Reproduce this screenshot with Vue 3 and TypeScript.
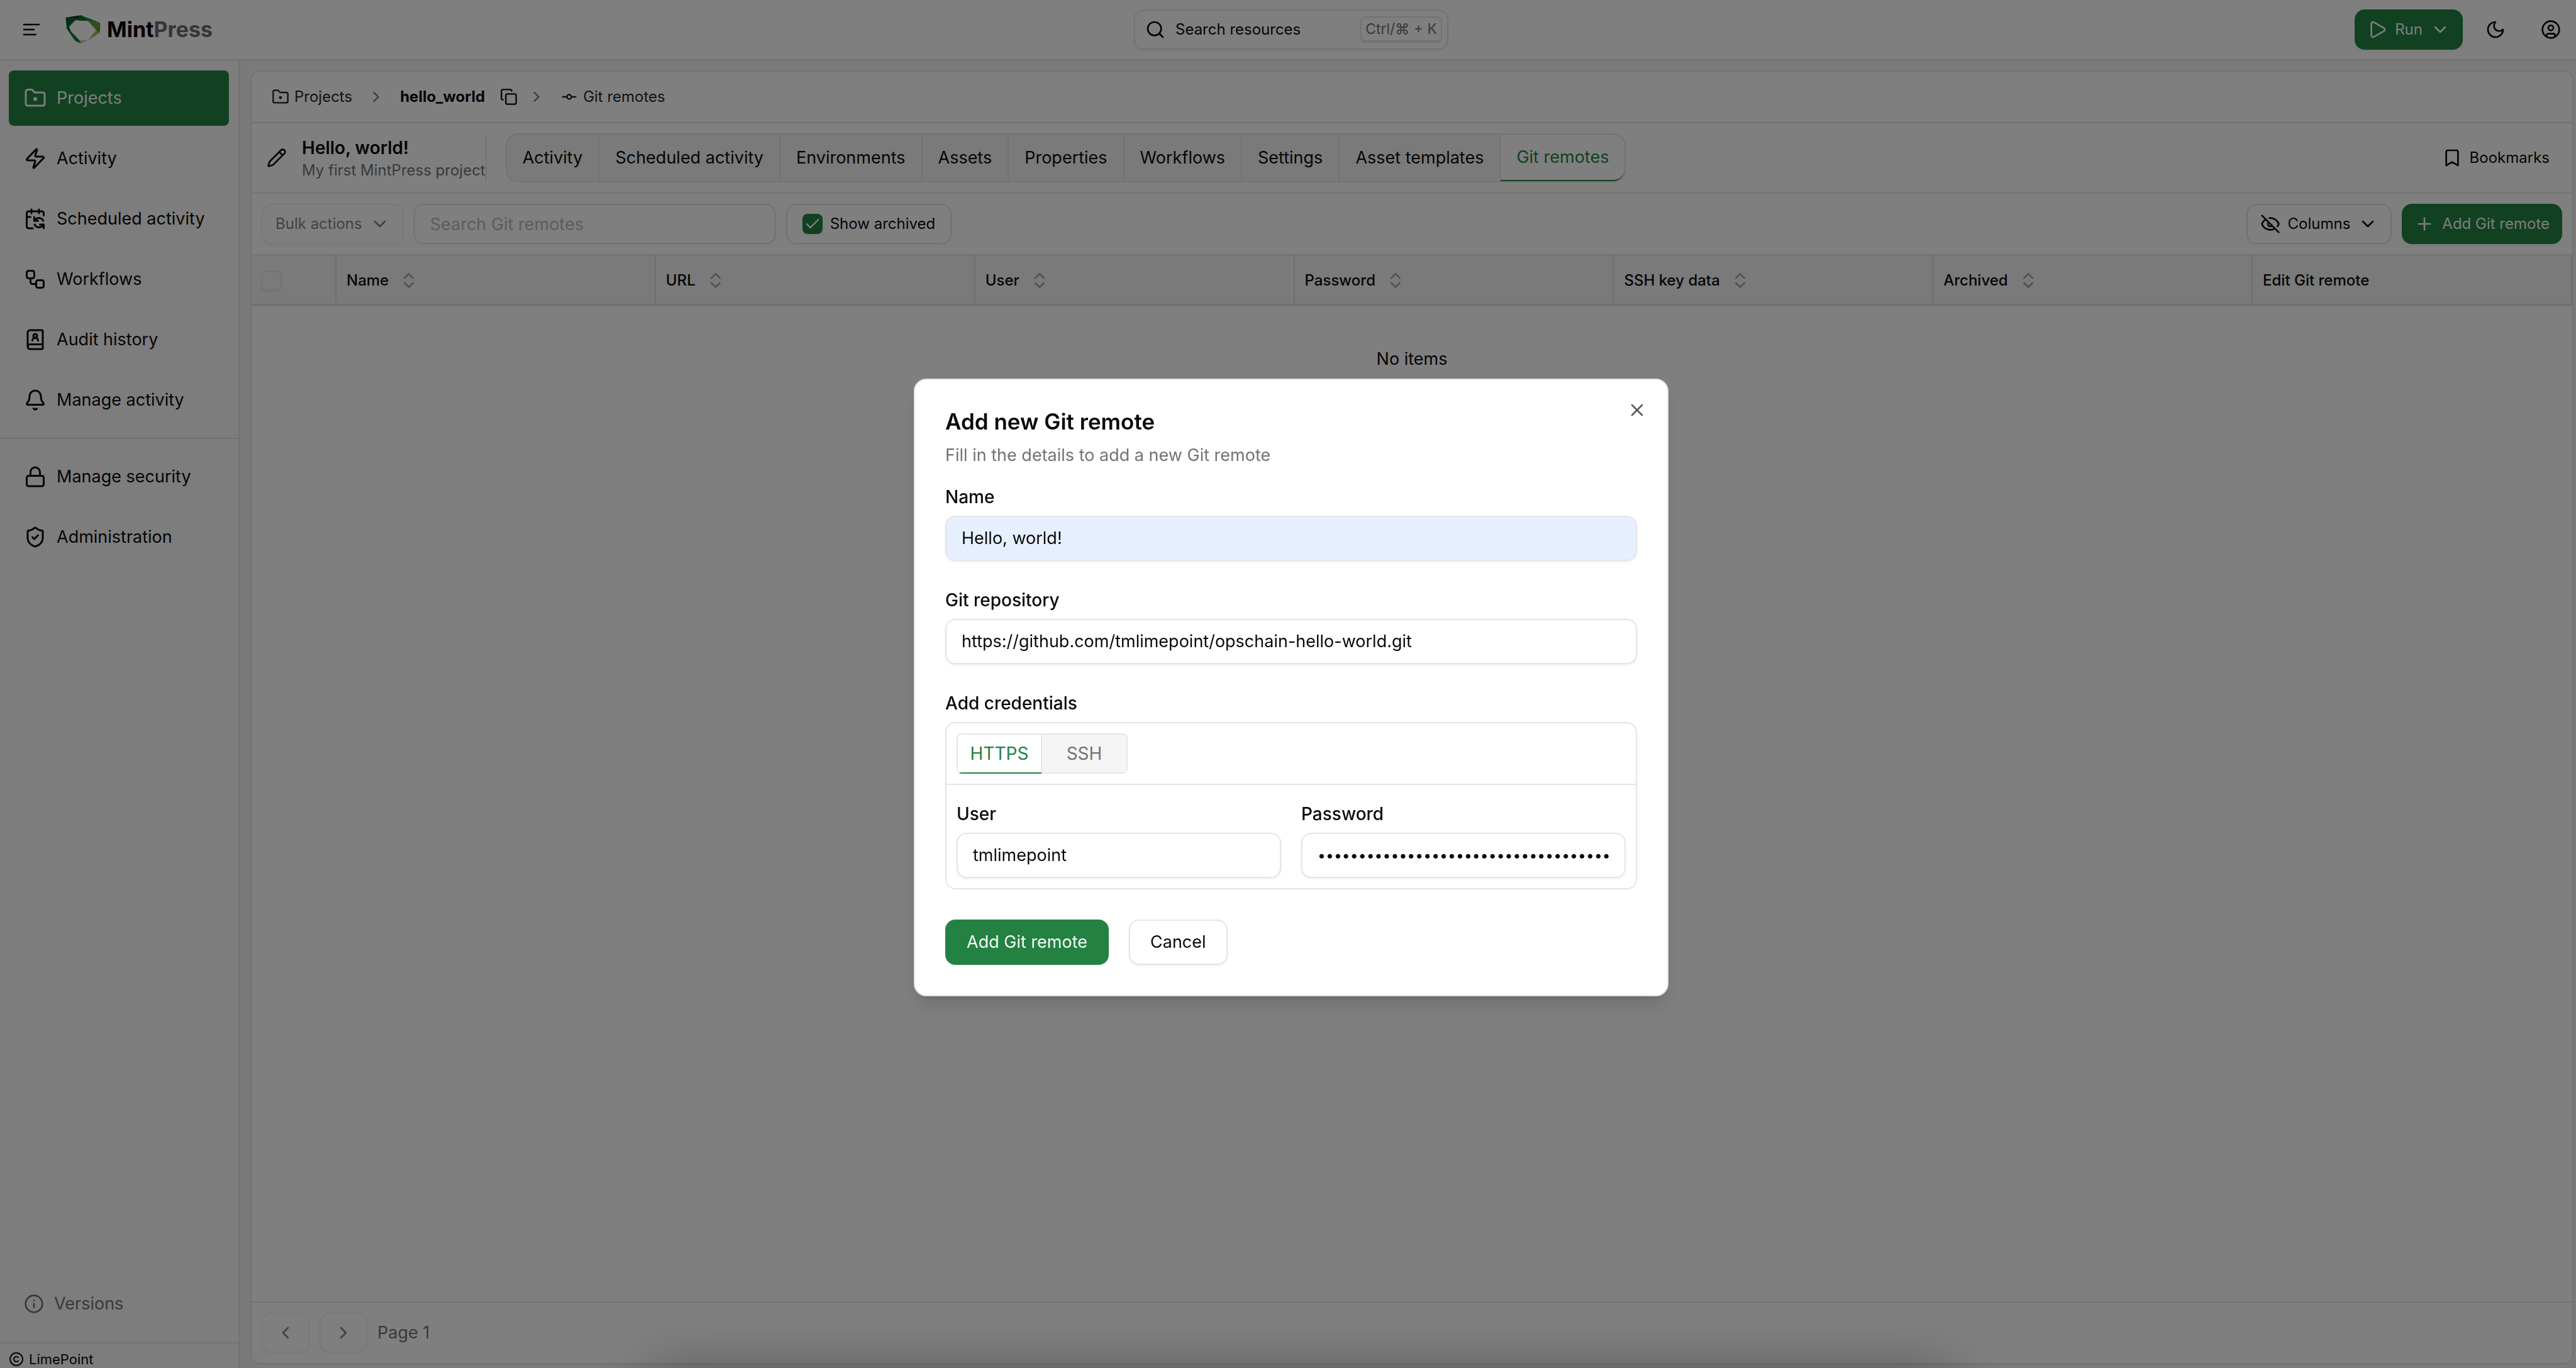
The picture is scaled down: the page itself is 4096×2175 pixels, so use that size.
<script setup lang="ts">
import { h, ref } from 'vue'

const glyphs: Record<string, string> = {
  menu: '<path d="M21 6H3"/><path d="M15 12H3"/><path d="M17 18H3"/>',
  folder: '<path d="M4 20h16a2 2 0 0 0 2-2V8a2 2 0 0 0-2-2h-7.9a2 2 0 0 1-1.69-.9L9.6 3.9A2 2 0 0 0 7.93 3H4a2 2 0 0 0-2 2v13a2 2 0 0 0 2 2Z"/><circle cx="12" cy="13" r="1"/>',
  zap: '<path d="M4 14a1 1 0 0 1-.78-1.63l9.9-10.2a.5.5 0 0 1 .86.46l-1.92 6.02A1 1 0 0 0 13 10h7a1 1 0 0 1 .78 1.63l-9.9 10.2a.5.5 0 0 1-.86-.46l1.92-6.02A1 1 0 0 0 11 14z"/>',
  calendar: '<path d="M11 10v4h4"/><path d="m11 14 1.535-1.605a5 5 0 0 1 8 1.5"/><path d="M16 2v4"/><path d="m21 18-1.535 1.605a5 5 0 0 1-8-1.5"/><path d="M21 22v-4h-4"/><path d="M21 8.5V6a2 2 0 0 0-2-2H5a2 2 0 0 0-2 2v14a2 2 0 0 0 2 2h4.3"/><path d="M3 10h4"/><path d="M8 2v4"/>',
  workflow: '<rect width="8" height="8" x="3" y="3" rx="2"/><path d="M7 11v4a2 2 0 0 0 2 2h4"/><rect width="8" height="8" x="13" y="13" rx="2"/>',
  book: '<path d="M15 13a3 3 0 1 0-6 0"/><path d="M4 19.5v-15A2.5 2.5 0 0 1 6.5 2H19a1 1 0 0 1 1 1v18a1 1 0 0 1-1 1H6.5a1 1 0 0 1 0-5H20"/><circle cx="12" cy="8" r="2"/>',
  bell: '<path d="M10.268 21a2 2 0 0 0 3.464 0"/><path d="M3.262 15.326A1 1 0 0 0 4 17h16a1 1 0 0 0 .74-1.673C19.41 13.956 18 12.499 18 8A6 6 0 0 0 6 8c0 4.499-1.411 5.956-2.738 7.326"/>',
  lock: '<rect width="18" height="11" x="3" y="11" rx="2"/><path d="M7 11V7a5 5 0 0 1 10 0v4"/>',
  shield: '<path d="M20 13c0 5-3.5 7.5-7.66 8.95a1 1 0 0 1-.67-.01C7.5 20.5 4 18 4 13V6a1 1 0 0 1 1-1c2 0 4.5-1.2 6.24-2.72a1.17 1.17 0 0 1 1.52 0C14.51 3.81 17 5 19 5a1 1 0 0 1 1 1z"/><path d="m9 12 2 2 4-4"/>',
  info: '<circle cx="12" cy="12" r="10"/><path d="M12 16v-4"/><path d="M12 8h.01"/>',
  copyright: '<circle cx="12" cy="12" r="10"/><path d="M14.83 14.83a4 4 0 1 1 0-5.66"/>',
  search: '<circle cx="11" cy="11" r="8"/><path d="m21 21-4.3-4.3"/>',
  play: '<path d="M5 5a2 2 0 0 1 3.008-1.728l11.997 6.998a2 2 0 0 1 .003 3.458l-12 7A2 2 0 0 1 5 19z"/>',
  moon: '<path d="M12 3a6 6 0 0 0 9 9 9 9 0 1 1-9-9Z"/>',
  user: '<circle cx="12" cy="12" r="10"/><circle cx="12" cy="10" r="3"/><path d="M7 20.662V19a2 2 0 0 1 2-2h6a2 2 0 0 1 2 2v1.662"/>',
  right: '<path d="m9 18 6-6-6-6"/>',
  left: '<path d="m15 18-6-6 6-6"/>',
  down: '<path d="m6 9 6 6 6-6"/>',
  sort: '<path d="m7 15 5 5 5-5"/><path d="m7 9 5-5 5 5"/>',
  copy: '<rect width="14" height="14" x="8" y="8" rx="2"/><path d="M4 16c-1.1 0-2-.9-2-2V4c0-1.1.9-2 2-2h10c1.1 0 2 .9 2 2"/>',
  commit: '<circle cx="12" cy="12" r="3"/><path d="M3 12h6"/><path d="M15 12h6"/>',
  pencil: '<path d="M21.174 6.812a1 1 0 0 0-3.986-3.987L3.842 16.174a2 2 0 0 0-.5.83l-1.321 4.352a.5.5 0 0 0 .623.622l4.353-1.32a2 2 0 0 0 .83-.497z"/><path d="m15 5 4 4"/>',
  bookmark: '<path d="m19 21-7-4-7 4V5a2 2 0 0 1 2-2h10a2 2 0 0 1 2 2v16z"/>',
  check: '<path d="M20 6 9 17l-5-5"/>',
  eyeOff: '<path d="M10.733 5.076a10.744 10.744 0 0 1 11.205 6.575 1 1 0 0 1 0 .696 10.747 10.747 0 0 1-1.444 2.49"/><path d="M14.084 14.158a3 3 0 0 1-4.242-4.242"/><path d="M17.479 17.499a10.75 10.75 0 0 1-15.417-5.151 1 1 0 0 1 0-.696 10.75 10.75 0 0 1 4.446-5.143"/><path d="m2 2 20 20"/>',
  plus: '<path d="M5 12h14"/><path d="M12 5v14"/>',
  close: '<path d="M18 6 6 18"/><path d="m6 6 12 12"/>',
}

const Icon = (props: { name: string; size?: number }) =>
  h('svg', {
    class: 'icon',
    viewBox: '0 0 24 24',
    width: props.size ?? 32,
    height: props.size ?? 32,
    'aria-hidden': 'true',
    innerHTML: glyphs[props.name],
  })
Icon.props = ['name', 'size']

interface NavItem {
  label: string
  icon: string
}

const mainNav: NavItem[] = [
  { label: 'Projects', icon: 'folder' },
  { label: 'Activity', icon: 'zap' },
  { label: 'Scheduled activity', icon: 'calendar' },
  { label: 'Workflows', icon: 'workflow' },
  { label: 'Audit history', icon: 'book' },
  { label: 'Manage activity', icon: 'bell' },
]
const adminNav: NavItem[] = [
  { label: 'Manage security', icon: 'lock' },
  { label: 'Administration', icon: 'shield' },
]
const tabs = [
  'Activity', 'Scheduled activity', 'Environments', 'Assets', 'Properties',
  'Workflows', 'Settings', 'Asset templates', 'Git remotes',
]
const columns = ['Name', 'URL', 'User', 'Password', 'SSH key data', 'Archived']

const activeNav = ref('Projects')
const activeTab = ref('Git remotes')
const showArchived = ref(true)
const filter = ref('')
const name = ref('Hello, world!')
const repository = ref('https://github.com/tmlimepoint/opschain-hello-world.git')
const user = ref('tmlimepoint')
const password = ref('x'.repeat(36))
</script>

<template>
  <div class="app">
    <header class="topbar">
      <div class="brand">
        <button class="bare" aria-label="Toggle menu"><Icon name="menu" /></button>
        <a href="#" class="logo">
          <svg width="56" height="46" viewBox="254 41 168 138" aria-hidden="true">
            <polygon points="255,52 328,42 308,60" fill="#17381d" />
            <polygon points="255,52 308,60 260,104" fill="#0b5a2b" />
            <polygon points="308,60 300,66 272,98 260,104 284,76" fill="#138140" />
            <polygon points="328,42 420,78 362,69 300,65" fill="#16873f" />
            <polygon points="328,42 362,69 300,65" fill="#0f6a33" />
            <polygon points="362,69 420,78 401,114" fill="#6d9f35" />
            <polygon points="420,78 418,125 401,112" fill="#57862b" />
            <polygon points="401,112 418,125 362,161" fill="#a2b84f" />
            <polygon points="362,161 328,177 318,160" fill="#c3cf93" />
            <polygon points="258,102 272,98 300,163" fill="#0c5f2e" />
            <polygon points="268,106 320,160 328,177 300,163" fill="#0f7a38" />
          </svg>
          <span class="wordmark">Mint<span class="press">Press</span></span>
        </a>
      </div>
      <button class="finder">
        <Icon name="search" />
        <span class="finder-text">Search resources</span>
        <kbd>Ctrl/⌘ + K</kbd>
      </button>
      <div class="actions">
        <button class="btn primary"><Icon name="play" />Run<Icon name="down" /></button>
        <button class="btn ghost" aria-label="Theme"><Icon name="moon" /></button>
        <button class="btn ghost" aria-label="Account"><Icon name="user" /></button>
      </div>
    </header>

    <div class="body">
      <aside class="sidebar">
        <nav class="nav">
          <a
            v-for="item in mainNav" :key="item.label" href="#"
            :class="{ active: item.label === activeNav }" @click.prevent="activeNav = item.label"
          ><Icon :name="item.icon" :size="36" />{{ item.label }}</a>
        </nav>
        <nav class="nav admin">
          <a v-for="item in adminNav" :key="item.label" href="#"><Icon :name="item.icon" :size="36" />{{ item.label }}</a>
        </nav>
        <a href="#" class="versions"><Icon name="info" />Versions</a>
        <footer class="legal"><Icon name="copyright" :size="24" />LimePoint</footer>
      </aside>

      <main class="card">
        <nav class="crumbs" aria-label="Breadcrumb">
          <a href="#"><Icon name="folder" :size="28" />Projects</a>
          <Icon class="sep" name="right" :size="28" />
          <strong>hello_world</strong>
          <span class="copy-group">
            <button class="bare" aria-label="Copy"><Icon name="copy" :size="28" /></button>
            <Icon class="sep" name="right" :size="28" />
          </span>
          <a href="#"><Icon name="commit" :size="28" />Git remotes</a>
        </nav>

        <section class="heading">
          <button class="bare" aria-label="Edit project"><Icon name="pencil" /></button>
          <div class="title">
            <h1>Hello, world!</h1>
            <p>My first MintPress project</p>
          </div>
          <nav class="tabs">
            <a
              v-for="tab in tabs" :key="tab" href="#"
              :class="{ active: tab === activeTab }" @click.prevent="activeTab = tab"
            >{{ tab }}</a>
          </nav>
          <button class="btn ghost push"><Icon name="bookmark" />Bookmarks</button>
        </section>

        <section class="toolbar">
          <button class="btn outline" disabled>Bulk actions<Icon name="down" /></button>
          <input v-model="filter" class="field filter" type="text" placeholder="Search Git remotes" aria-label="Search Git remotes">
          <label class="archived">
            <span class="tick">
              <input v-model="showArchived" type="checkbox">
              <Icon v-if="showArchived" name="check" :size="28" />
            </span>
            Show archived
          </label>
          <button class="btn outline push"><Icon name="eyeOff" />Columns<Icon name="down" /></button>
          <button class="btn primary"><Icon name="plus" />Add Git remote</button>
        </section>

        <div class="grid">
          <table>
            <thead>
              <tr>
                <th class="select"><input type="checkbox" disabled aria-label="Select all"></th>
                <th v-for="column in columns" :key="column">
                  <span class="th">{{ column }}<Icon class="sort" name="sort" /></span>
                </th>
                <th><span class="th">Edit Git remote</span></th>
              </tr>
            </thead>
            <tbody>
              <tr><td :colspan="columns.length + 2">No items</td></tr>
            </tbody>
          </table>
        </div>

        <footer class="pager">
          <button class="btn outline" disabled aria-label="Previous page"><Icon name="left" /></button>
          <button class="btn outline" disabled aria-label="Next page"><Icon name="right" /></button>
          <span>Page 1</span>
        </footer>
      </main>
    </div>

    <div class="dock-shade"></div>

    <div class="overlay">
      <form class="dialog" role="dialog" aria-labelledby="dialog-title" @submit.prevent>
        <button type="button" class="bare close" aria-label="Close"><Icon name="close" /></button>
        <h2 id="dialog-title">Add new Git remote</h2>
        <p class="lead">Fill in the details to add a new Git remote</p>

        <div class="group first">
          <label for="name">Name</label>
          <input id="name" v-model="name" class="field autofilled" type="text">
        </div>
        <div class="group">
          <label for="repository">Git repository</label>
          <input id="repository" v-model="repository" class="field" type="text">
        </div>
        <div class="group">
          <span class="label">Add credentials</span>
          <div class="credentials">
            <div class="modes">
              <div class="segments" role="tablist">
                <button type="button" role="tab" aria-selected="true" class="active">HTTPS</button>
                <button type="button" role="tab" aria-selected="false">SSH</button>
              </div>
            </div>
            <div class="pair">
              <div class="column">
                <label for="user">User</label>
                <input id="user" v-model="user" class="field" type="text">
              </div>
              <div class="column">
                <label for="password">Password</label>
                <input id="password" v-model="password" class="field" type="password">
              </div>
            </div>
          </div>
        </div>

        <div class="buttons">
          <button type="submit" class="btn large primary">Add Git remote</button>
          <button type="button" class="btn large outline">Cancel</button>
        </div>
      </form>
    </div>
  </div>
</template>

<style>
body {
  margin: 0;
  overflow: hidden;
}
</style>

<style scoped>
.app,
.app * {
  box-sizing: border-box;
}
.app {
  --line: #e5e5e5;
  --muted: #737373;
  --green: #238242;
  --soft-shadow: 0 2px 4px rgba(0, 0, 0, 0.06);
  position: relative;
  display: flex;
  flex-direction: column;
  min-height: 100vh;
  overflow: hidden;
  background: #f5f5f5;
  color: #0a0a0a;
  font: 400 27px/40px Inter, "Liberation Sans", sans-serif;
}
.icon {
  flex: none;
  display: block;
  fill: none;
  stroke: currentColor;
  stroke-width: 2;
  stroke-linecap: round;
  stroke-linejoin: round;
}
a {
  color: inherit;
  text-decoration: none;
}
button,
input {
  margin: 0;
  font: inherit;
  color: inherit;
}
h1,
h2,
p {
  margin: 0;
}

.bare {
  display: flex;
  padding: 0;
  border: 0;
  background: none;
}
.btn {
  display: flex;
  align-items: center;
  gap: 12px;
  height: 64px;
  padding: 0 20px;
  border: 0;
  border-radius: 16px;
  background: none;
  font-size: 24px;
  line-height: 32px;
  white-space: nowrap;
}
.btn.primary {
  background: var(--green);
  color: #fafafa;
  box-shadow: var(--soft-shadow);
}
.btn.outline {
  border: 2px solid var(--line);
  background: #fff;
  box-shadow: var(--soft-shadow);
}
.btn:disabled {
  opacity: 0.5;
}
.btn.large {
  height: 72px;
  padding: 0 32px;
  font-size: 27px;
}
.btn.large.primary {
  padding: 0 34px;
}
.push {
  margin-left: auto;
}
.field {
  width: 100%;
  height: 72px;
  padding: 0 24px;
  border: 2px solid var(--line);
  border-radius: 16px;
  outline: 0;
  background: #fff;
  box-shadow: var(--soft-shadow);
}
.field::placeholder {
  color: var(--muted);
  opacity: 0.5;
}
.field[type="password"] {
  font-size: 23px;
}

.topbar {
  display: grid;
  grid-template-columns: 1fr auto 1fr;
  align-items: center;
  height: 96px;
  padding: 0 4px 0 14px;
  border-bottom: 2px solid var(--line);
  background: #fff;
}
.brand,
.logo {
  display: flex;
  align-items: center;
}
.brand {
  gap: 38px;
  padding-left: 20px;
}
.logo {
  gap: 10px;
}
.wordmark {
  color: #000;
  font-size: 34px;
  font-weight: 700;
}
.press {
  color: #6b6b6b;
}
.finder {
  display: flex;
  align-items: center;
  gap: 16px;
  width: 500px;
  height: 64px;
  padding: 0 8px 0 16px;
  border: 2px solid var(--line);
  border-radius: 16px;
  background: #fff;
  box-shadow: var(--soft-shadow);
  font-size: 24px;
  line-height: 32px;
}
.finder-text {
  flex: 1;
  text-align: left;
}
kbd {
  padding: 2px 6px;
  border: 2px solid var(--line);
  border-bottom-width: 4px;
  border-radius: 8px;
  color: var(--muted);
  font: 23px/32px Inter, "Liberation Sans", sans-serif;
}
.actions {
  display: flex;
  justify-content: flex-end;
  gap: 16px;
}
.actions .ghost {
  width: 72px;
}

.body {
  flex: 1;
  display: flex;
}
.sidebar {
  display: flex;
  flex-direction: column;
  flex: none;
  width: 382px;
  border-right: 2px solid var(--line);
  background: #fafafa;
}
.nav {
  display: flex;
  flex-direction: column;
  gap: 8px;
  padding: 16px 16px 16px 14px;
}
.nav a {
  display: flex;
  align-items: center;
  gap: 16px;
  height: 88px;
  padding: 0 24px;
  border-radius: 8px;
}
.nav a.active {
  background: var(--green);
  color: #fafafa;
}
.nav.admin {
  border-top: 2px solid var(--line);
}
.versions {
  display: flex;
  align-items: center;
  gap: 16px;
  height: 124px;
  margin-top: auto;
  padding: 0 38px;
  border-bottom: 2px solid var(--line);
  color: var(--muted);
}
.legal {
  display: flex;
  align-items: center;
  gap: 8px;
  height: 39px;
  padding: 10px 14px 0;
  font-size: 22px;
  line-height: 28px;
}

.card {
  flex: 1;
  min-width: 0;
  display: flex;
  flex-direction: column;
  margin: 16px 4px 6px 16px;
  border: 2px solid var(--line);
  border-radius: 16px;
  overflow: hidden;
  background: #fff;
}
.crumbs {
  display: flex;
  align-items: center;
  gap: 24px;
  height: 82px;
  padding: 0 32px;
  border-bottom: 2px solid var(--line);
  font-size: 24px;
  line-height: 32px;
}
.crumbs a {
  display: flex;
  align-items: center;
  gap: 8px;
  color: #262626;
}
.crumbs strong {
  font-weight: 700;
}
.copy-group {
  display: flex;
  gap: 16px;
}
.sep {
  color: var(--muted);
}
.heading {
  display: flex;
  align-items: center;
  height: 112px;
  padding: 0 16px 0 24px;
  border-bottom: 2px solid var(--line);
}
.title {
  margin: 0 30px 0 24px;
  border-right: 2px solid var(--line);
  white-space: nowrap;
}
.title h1 {
  font-size: 28px;
  font-weight: 600;
  line-height: 40px;
}
.title p {
  color: var(--muted);
  font-size: 24px;
  line-height: 32px;
}
.tabs {
  display: flex;
  height: 78px;
  border: 2px solid var(--line);
  border-radius: 20px;
  overflow: hidden;
  background: #f5f5f5;
}
.tabs a {
  display: flex;
  align-items: center;
  padding: 0 25px;
  border-right: 2px solid var(--line);
  white-space: nowrap;
}
.tabs a.active {
  border-right: 0;
  border-bottom: 2px solid var(--green);
  border-radius: 0 0 18px 0;
  background: #fff;
  color: var(--green);
}
.toolbar {
  display: flex;
  align-items: center;
  gap: 16px;
  height: 98px;
  padding: 0 16px;
  border-bottom: 2px solid var(--line);
}
.filter {
  width: 576px;
  height: 64px;
}
.archived {
  display: flex;
  align-items: center;
  gap: 12px;
  height: 64px;
  padding: 0 24px;
  border: 2px solid var(--line);
  border-radius: 16px;
  box-shadow: var(--soft-shadow);
  font-size: 24px;
  line-height: 32px;
  white-space: nowrap;
}
input[type="checkbox"] {
  appearance: none;
  display: block;
  width: 32px;
  height: 32px;
  border: 2px solid var(--line);
  border-radius: 8px;
  box-shadow: var(--soft-shadow);
}
input[type="checkbox"]:checked {
  border-color: var(--green);
  background: var(--green);
}
.tick {
  display: grid;
  place-items: center;
  color: #fafafa;
}
.tick > * {
  grid-area: 1 / 1;
}

.grid {
  flex: 1;
}
table {
  width: 100%;
  border-collapse: separate;
  border-spacing: 0;
  table-layout: fixed;
}
th {
  height: 79px;
  padding: 2px 16px 0;
  border-right: 2px solid #dcdcdc;
  border-bottom: 2px solid #dcdcdc;
  background: #f5f5f5;
  box-shadow: 0 2px 0 #ececec;
  font-size: 24px;
  font-weight: 500;
  line-height: 32px;
  text-align: left;
}
.select {
  width: 135px;
}
.th {
  display: flex;
  align-items: center;
  gap: 16px;
}
.sort {
  color: #a0a0a0;
}
td {
  padding: 66px 0 0;
  text-align: center;
}
.pager {
  display: flex;
  align-items: center;
  gap: 16px;
  height: 98px;
  padding: 0 16px;
  border-top: 2px solid var(--line);
  color: var(--muted);
}
.pager .btn {
  color: #0a0a0a;
}

.dock-shade {
  position: absolute;
  top: 100%;
  left: 25%;
  right: 24%;
  height: 80px;
  border-radius: 40px;
  box-shadow: 0 0 90px rgba(0, 0, 0, 0.28);
}
.overlay {
  position: fixed;
  inset: 0;
  display: flex;
  align-items: center;
  justify-content: center;
  padding: 10px 0 0 10px;
  background: rgba(0, 0, 0, 0.5);
}
.dialog {
  position: relative;
  display: flex;
  flex-direction: column;
  width: 1200px;
  padding: 48px;
  border: 2px solid var(--line);
  border-radius: 20px;
  background: #fff;
  box-shadow: 0 20px 30px -6px rgba(0, 0, 0, 0.12), 0 8px 12px -8px rgba(0, 0, 0, 0.12);
}
.close {
  position: absolute;
  top: 32px;
  right: 32px;
  color: #5a5a5a;
}
.dialog h2 {
  font-size: 35px;
  font-weight: 600;
  line-height: 36px;
}
.lead {
  margin-top: 16px;
  color: var(--muted);
}
.group,
.column {
  display: flex;
  flex-direction: column;
  gap: 16px;
}
.group {
  margin-top: 48px;
}
.group.first {
  margin-top: 32px;
}
.dialog label,
.label {
  font-size: 28px;
  font-weight: 500;
  line-height: 28px;
}
.autofilled {
  background: #e6effe;
}
.credentials {
  border: 2px solid var(--line);
  border-radius: 16px;
}
.modes {
  display: flex;
  padding: 16px;
  border-bottom: 2px solid var(--line);
}
.segments {
  display: flex;
  height: 64px;
  border: 2px solid var(--line);
  border-bottom: 0;
  border-radius: 8px;
  overflow: hidden;
}
.segments button {
  width: 134px;
  padding: 0;
  border: 0;
  border-bottom: 2px solid var(--line);
  background: #f5f5f5;
  color: var(--muted);
  font-size: 28px;
}
.segments .active {
  border-right: 2px solid var(--line);
  border-bottom-color: var(--green);
  background: #fff;
  color: var(--green);
}
.pair {
  display: flex;
  gap: 32px;
  padding: 32px 16px 16px;
}
.column {
  flex: 1;
}
.buttons {
  display: flex;
  gap: 32px;
  margin-top: 48px;
}
</style>
